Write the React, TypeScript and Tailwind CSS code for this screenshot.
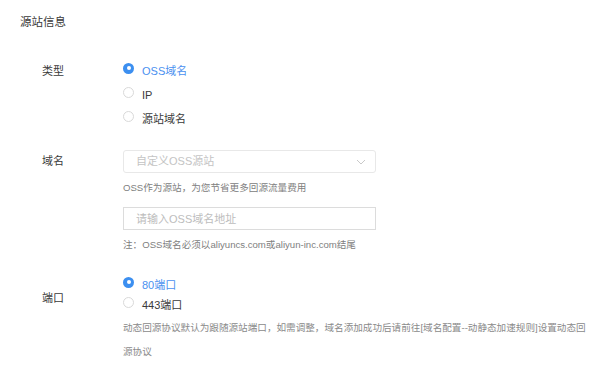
import React, { useState } from "react";

const font = "font-['Liberation_Sans','Noto_Sans_CJK_SC',sans-serif]";

type Option = { value: string; label: string };

function Radio({ checked }: { checked: boolean }) {
  return checked ? (
    <span className="mb-[6px] flex h-[11px] w-[11px] shrink-0 items-center justify-center rounded-full bg-[#3c8ff0]">
      <span className="h-[4px] w-[4px] rounded-full bg-white" />
    </span>
  ) : (
    <span className="mb-[6px] h-[11px] w-[11px] shrink-0 rounded-full border border-[#d9d9d9] bg-white" />
  );
}

function RadioGroup({
  options,
  value,
  onChange,
  rowClass,
}: {
  options: Option[];
  value: string;
  onChange: (v: string) => void;
  rowClass: string;
}) {
  return (
    <div className="flex flex-col">
      {options.map((o) => (
        <label
          key={o.value}
          className={`flex cursor-pointer items-center gap-[8px] ${rowClass}`}
          onClick={() => onChange(o.value)}
        >
          <Radio checked={value === o.value} />
          <span className={`text-[11px] ${value === o.value ? "text-[#4a90f0]" : "text-[#3a3a3a]"}`}>
            {o.label}
          </span>
        </label>
      ))}
    </div>
  );
}

export default function App() {
  const [type, setType] = useState("oss");
  const [port, setPort] = useState("80");
  const [domain, setDomain] = useState("");

  return (
    <div className={`min-h-screen w-full bg-white pl-[20px] pt-[10px] ${font}`}>
      <h2 className="h-[24px] text-[11.5px] leading-[24px] text-[#3a3a3a]">源站信息</h2>

      <div className="mt-[25px] flex flex-col pl-[22px]">
        {/* 类型 */}
        <div className="flex">
          <div className="w-[81px] shrink-0 text-[11px] leading-[24px] text-[#3a3a3a]">类型</div>
          <RadioGroup
            rowClass="h-[24px]"
            value={type}
            onChange={setType}
            options={[
              { value: "oss", label: "OSS域名" },
              { value: "ip", label: "IP" },
              { value: "origin", label: "源站域名" },
            ]}
          />
        </div>

        {/* 域名 */}
        <div className="mt-[19px] flex">
          <div className="h-[23px] w-[81px] shrink-0 text-[11px] leading-[23px] text-[#3a3a3a]">域名</div>
          <div className="flex w-[253px] flex-col">
            <div className="flex h-[23px] items-center justify-between rounded-[3px] border border-[#e8e8e8] pl-[12px] pr-[9px]">
              <span className="text-[11px] text-[#c4c4c4]">自定义OSS源站</span>
              <svg width="10" height="6" viewBox="0 0 10 6" fill="none">
                <path d="M1 1l4 4 4-4" stroke="#c9c9c9" strokeWidth="1" />
              </svg>
            </div>
            <p className="mt-[3px] whitespace-nowrap text-[9.6px] leading-[24px] text-[#808080]">
              OSS作为源站，为您节省更多回源流量费用
            </p>
            <input
              value={domain}
              onChange={(e) => setDomain(e.target.value)}
              placeholder="请输入OSS域名地址"
              className="mt-[7px] h-[23px] border border-[#dcdcdc] px-[12px] text-[11px] text-[#333] outline-none placeholder:text-[#bdbdbd]"
            />
            <p className="mt-[3px] whitespace-nowrap text-[9.6px] leading-[24px] text-[#808080]">
              注：OSS域名必须以aliyuncs.com或aliyun-inc.com结尾
            </p>
          </div>
        </div>

        {/* 端口 */}
        <div className="mt-[18px] flex">
          <div className="flex h-[40px] w-[81px] shrink-0 items-center pt-[6px] text-[11px] text-[#3a3a3a]">端口</div>
          <div className="flex flex-col">
            <RadioGroup
              rowClass="h-[20px]"
              value={port}
              onChange={setPort}
              options={[
                { value: "80", label: "80端口" },
                { value: "443", label: "443端口" },
              ]}
            />
          </div>
        </div>
        <p className="ml-[81px] mt-[1px] w-[470px] text-[9.6px] leading-[24px] text-[#8a8a8a]">
          动态回源协议默认为跟随源站端口，如需调整，域名添加成功后请前往[域名配置--动静态加速规则]设置动态回源协议
        </p>
      </div>
    </div>
  );
}
